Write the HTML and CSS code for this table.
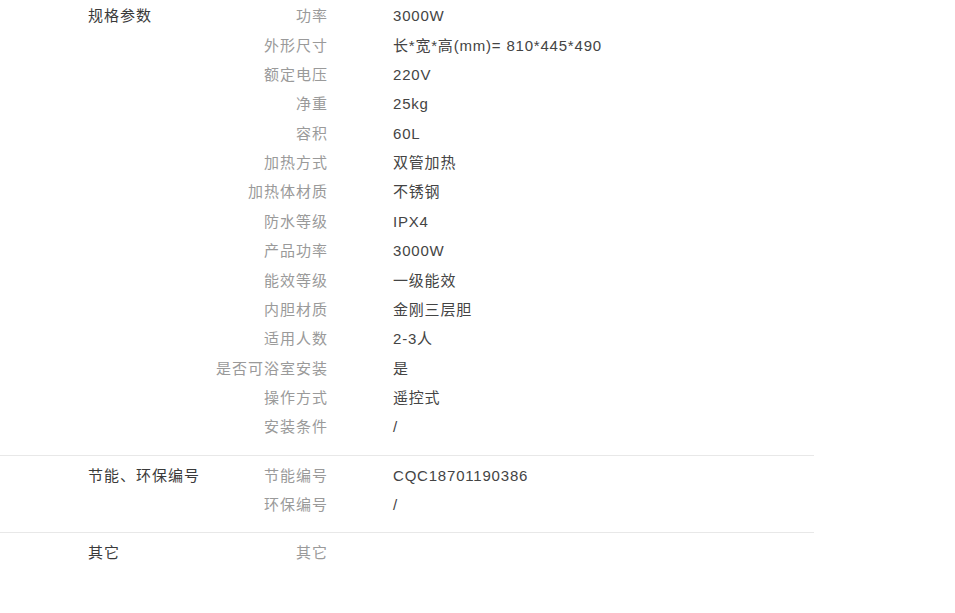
FILE: index.html
```html
<!DOCTYPE html>
<html lang="zh-CN">
<head>
  <meta charset="UTF-8">
  <meta name="viewport" content="width=device-width, initial-scale=1.0">
  <title>规格参数</title>
  <link rel="stylesheet" href="styles.css">
</head>
<body>
  <div class="specs">
    <div class="spec-group">
      <div class="group-title">规格参数</div>
      <dl class="spec-list">
        <div class="spec-row"><dt>功率</dt><dd>3000W</dd></div>
        <div class="spec-row"><dt>外形尺寸</dt><dd>长*宽*高(mm)= 810*445*490</dd></div>
        <div class="spec-row"><dt>额定电压</dt><dd>220V</dd></div>
        <div class="spec-row"><dt>净重</dt><dd>25kg</dd></div>
        <div class="spec-row"><dt>容积</dt><dd>60L</dd></div>
        <div class="spec-row"><dt>加热方式</dt><dd>双管加热</dd></div>
        <div class="spec-row"><dt>加热体材质</dt><dd>不锈钢</dd></div>
        <div class="spec-row"><dt>防水等级</dt><dd>IPX4</dd></div>
        <div class="spec-row"><dt>产品功率</dt><dd>3000W</dd></div>
        <div class="spec-row"><dt>能效等级</dt><dd>一级能效</dd></div>
        <div class="spec-row"><dt>内胆材质</dt><dd>金刚三层胆</dd></div>
        <div class="spec-row"><dt>适用人数</dt><dd>2-3人</dd></div>
        <div class="spec-row"><dt>是否可浴室安装</dt><dd>是</dd></div>
        <div class="spec-row"><dt>操作方式</dt><dd>遥控式</dd></div>
        <div class="spec-row"><dt>安装条件</dt><dd>/</dd></div>
      </dl>
    </div>

    <div class="spec-group">
      <div class="group-title">节能、环保编号</div>
      <dl class="spec-list">
        <div class="spec-row"><dt>节能编号</dt><dd>CQC18701190386</dd></div>
        <div class="spec-row"><dt>环保编号</dt><dd>/</dd></div>
      </dl>
    </div>

    <div class="spec-group">
      <div class="group-title">其它</div>
      <dl class="spec-list">
        <div class="spec-row"><dt>其它</dt><dd></dd></div>
      </dl>
    </div>
  </div>
</body>
</html>
```

FILE: styles.css
```css
:root {
  --title: #3a3a3a;
  --label: #9a9a9a;
  --value: #444444;
  --line: #e8e8e8;
}

* {
  margin: 0;
  padding: 0;
  box-sizing: border-box;
}

body {
  font-family: 'Liberation Sans', 'Noto Sans CJK SC', sans-serif;
  font-size: 15px;
  letter-spacing: 1px;
  background: #ffffff;
}

.specs {
  width: 814px;
}

.spec-group {
  display: flex;
  padding: 5px 0 13px;
  border-bottom: 1px solid var(--line);
}

.spec-group:first-child {
  padding-top: 1.3px;
}

.spec-group:last-child {
  border-bottom: none;
}

.group-title {
  width: 88px;
  box-sizing: content-box;
  padding-left: 88px;
  color: var(--title);
  line-height: 29.36px;
  white-space: nowrap;
}

.spec-list {
  flex: 1;
}

.spec-row {
  display: flex;
  line-height: 29.36px;
  height: 29.36px;
}

.spec-row dt {
  width: 152px;
  text-align: right;
  color: var(--label);
}

.spec-row dd {
  margin-left: 65px;
  color: var(--value);
  letter-spacing: 0.8px;
}
```
